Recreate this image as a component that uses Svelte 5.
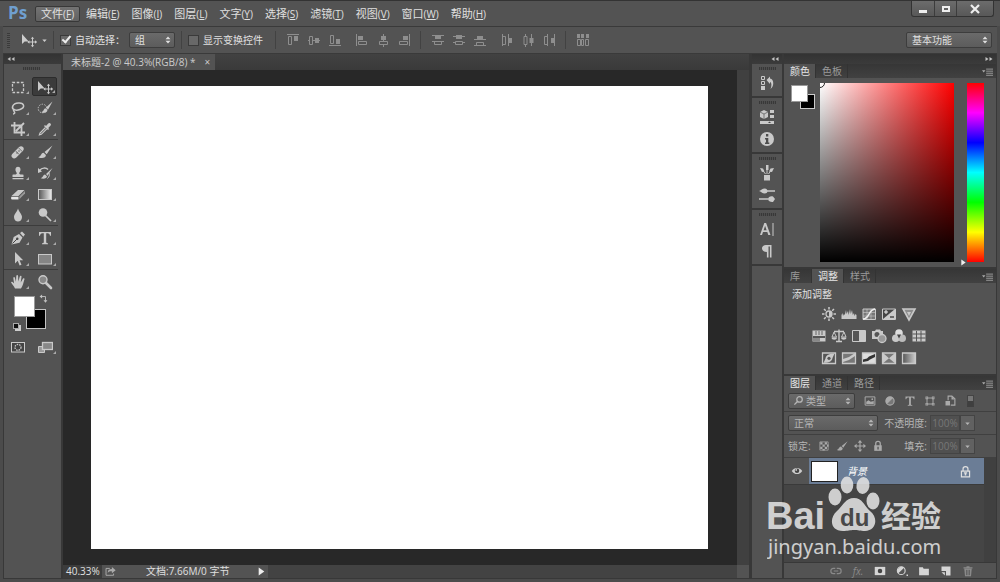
<script lang="ts">
	const menus = [
		['文件', 'F'],
		['编辑', 'E'],
		['图像', 'I'],
		['图层', 'L'],
		['文字', 'Y'],
		['选择', 'S'],
		['滤镜', 'T'],
		['视图', 'V'],
		['窗口', 'W'],
		['帮助', 'H']
	];

	const alignGroups = [
		[
			['alignTop', 'alignMiddle', 'alignBottom'],
			['alignLeft', 'alignCenter', 'alignRight']
		],
		[
			['distTop', 'distMiddle', 'distBottom'],
			['distLeft', 'distCenter', 'distRight']
		],
		[['autoAlign']]
	];

	const toolGroups = [
		['marquee', 'move', 'lasso', 'quickSelect', 'crop', 'eyedropper'],
		['heal', 'brush', 'stamp', 'historyBrush', 'eraser', 'gradient', 'blur', 'dodge'],
		['pen', 'type', 'pathSelect', 'rectangle'],
		['hand', 'zoom']
	];

	const dockGroups = [['history'], ['properties', 'info'], ['brushPresets', 'brushes'], ['character', 'paragraph']];

	const adjustments = [
		['brightness', 'levels', 'curves', 'exposure', 'vibrance'],
		['hue', 'balance', 'blackWhite', 'photoFilter', 'mixer', 'lookup'],
		['invert', 'posterize', 'threshold', 'selectiveColor', 'gradientMap']
	];

	const filters = ['image', 'adjust', 'type', 'shape', 'smart'];
	const locks = ['checker', 'brush', 'moveAll', 'lock'];
	const footer = ['link', 'fx', 'mask', 'adjustMenu', 'folder', 'newLayer', 'trash'];

	const f = 'fill="currentColor"';
	const s = 'fill="none" stroke="currentColor"';

	// 16x16 glyphs, drawn in the current text colour
	const icons: Record<string, string> = {
		marquee: `<rect x="2.5" y="3.5" width="11" height="10" ${s} stroke-width="1.3" stroke-dasharray="2.6 1.6"/>`,
		move: `<path d="M1 2v10l2.700-2.500h4z" ${f}/><path d="M11.500 6v8M7.500 10h8" ${s}/><path d="M11.500 4.800l1.700 2h-3.400zM11.500 15.200l1.700-2h-3.400zM6.400 10l2-1.700v3.400zM16 10l-2-1.700v3.400z" ${f}/>`,
		lasso: `<path d="M4.500 10C1 8.500 2 3.500 8.500 3c6-.4 7 4.500 1.500 6.500-2.500.9-5 1-6.200-.2-1.200 1.500.8 2.200.9 3.200.1.800-.7 1.500-1.700 1.500" ${s} stroke-width="1.500"/>`,
		quickSelect: `<circle cx="5.500" cy="8.500" r="4.300" ${s} stroke-dasharray="1.400 1.300"/><path d="M15.500 1.500L9 7.500l2 2.200zM8.400 8.200c-2 .4-1.200 3-4.200 4 3 1.500 6.300.300 6.200-2.200z" ${f}/>`,
		crop: `<path d="M4.500 1v10.500H15M1 4.500h10.500V15M6 10l8-8" ${s} stroke-width="1.800"/>`,
		eyedropper: `<path d="M9 5l2.200-2.500c1.300-1.700 3.800.6 2.400 2L11.300 7l.7 1-1 1-4-4 1-1z" ${f}/><path d="M8.500 6.500L3 12l-.6 1.800 1.900-.5 5.500-5.500" ${s} stroke-width="1.200"/>`,
		heal: `<path d="M2.200 10l6.900-7c2.600-2.400 6.300 1 3.900 3.700l-6.900 7c-2.600 2.400-6.300-1-3.900-3.700z" ${f}/><path d="M5.500 6.800l4 4M8.500 3.800l4 4" stroke="#777"/><circle cx="7" cy="9" r=".7" fill="#555"/><circle cx="9" cy="7" r=".7" fill="#555"/>`,
		brush: `<path d="M15.500 1.500L7.500 8l2.200 2.300zM6.600 8.700c-2.700.1-2.200 3.500-5.400 4.500 3.500 1.700 8 .8 7.700-2.200z" ${f}/>`,
		stamp: `<path d="M6.800 8C4.500 5 5.400 1.800 8 1.800S11.500 5 9.200 8c0 1.200.6 1.500 4.300 1.700V12h-11V9.700C6.200 9.500 6.800 9.200 6.800 8zM2.500 13h11v1.300h-11z" ${f}/>`,
		historyBrush: `<path d="M2.500 5.500C5 2.500 9 2.500 11 4.500" ${s} stroke-width="1.500"/><path d="M1 3v5l4-1.500zM15.500 3L9 9l1.600 1.700zM8 9.500c-2 .4-1.700 2.700-4.300 3.700 3 1.200 6.500 0 6.200-1.900z" ${f}/><path d="M12 8c1 2 0 4-1.500 5.500" ${s}/>`,
		eraser: `<path d="M1.500 10L8 4h6.500L8.500 10z" ${f}/><path d="M1.500 10.700h7v2.800H2c-1 0-1.200-1.800-.5-2.800z" fill="#e6e6e6"/><path d="M9.300 10.500L15 5v2.500l-5.700 5.800z" fill="#999"/>`,
		gradient: `<defs><linearGradient id="g-tool"><stop stop-color="#555"/><stop offset="1" stop-color="#eee"/></linearGradient></defs><rect x="1.500" y="3.500" width="13" height="10" fill="url(#g-tool)" stroke="currentColor"/>`,
		blur: `<path d="M8 1.500c1 3.500 4 5.500 4 8.500 0 6-8 6-8 0 0-3 3-5 4-8.500z" ${f}/>`,
		dodge: `<circle cx="6" cy="5.500" r="4.300" ${f}/><path d="M8.500 8.500l5.500 5.500" ${s} stroke-width="1.700"/>`,
		pen: `<path d="M1.500 14.500L3.700 7 9 4l3.500 3.500-3 5.300zM10 3l2-1.500L15 4.500 13.300 6.700z" ${f}/><path d="M2.500 13.500L7 9" stroke="#444"/><circle cx="7.300" cy="8.700" r="1.200" fill="#444"/>`,
		type: `<path d="M2 2h12v3.800h-1C12.700 3.800 12 3.300 9.200 3.300V12c0 1 .5 1.300 1.800 1.300v.9H5v-.9c1.300 0 1.800-.3 1.800-1.300V3.300C4 3.300 3.300 3.800 3 5.800H2z" ${f}/>`,
		pathSelect: `<path d="M5 1v11.500l2.700-2.700 1.900 4.700 1.900-.8-1.900-4.500h3.600z" ${f}/>`,
		rectangle: `<rect x="1.500" y="3.500" width="13" height="9.500" fill="#858585" stroke="currentColor"/>`,
		hand: `<path d="M5 14.500C4 12 2 10.500 1 8.300c.5-1 1.700-.5 3.100 1.300L3.300 4c0-1.200 1.400-1.300 1.700-.1l.9 3.800L6.300 2c.1-1.200 1.700-1.200 1.800 0l.2 5.600L9.800 2.500c.4-1.100 1.900-.7 1.700.4l-.8 5.500 2.200-3.700c.7-1 1.900-.3 1.500.8-1.200 3.500-1.300 6-3.400 9z" ${f}/>`,
		zoom: `<circle cx="6" cy="5.800" r="4" fill="#888" stroke="currentColor" stroke-width="1.400"/><path d="M9 9l5 5" ${s} stroke-width="2.600" stroke-linecap="round"/>`,
		quickMask: `<rect x="1" y="3" width="14" height="10.500" ${f}/><rect x="2" y="4" width="12" height="8.500" fill="#444"/><circle cx="8" cy="8.300" r="3" ${s} stroke-width="1.300" stroke-dasharray="1.500 1"/>`,
		screenMode: `<path d="M1.500 7.500h6v6h-6z" fill="#999" stroke="currentColor"/><rect x="5.500" y="3.500" width="10" height="7" fill="#888" stroke="currentColor" stroke-width="1.300"/>`,

		alignTop: `<path d="M2 2.500h12M3.500 4.500h3v8h-3z" ${s}/><path d="M9 4h4v5H9z" ${f}/>`,
		alignMiddle: `<path d="M2 8.500h2M7 8.500h7M3.500 4.500h3v8h-3z" ${s}/><path d="M9 6h4v5H9z" ${f}/>`,
		alignBottom: `<path d="M2 13.500h12M3.500 3.500h3v8h-3z" ${s}/><path d="M9 7h4v5H9z" ${f}/>`,
		alignLeft: `<path d="M2.500 2v12M4.500 9.500h8v3h-8z" ${s}/><path d="M4 4h5v4H4z" ${f}/>`,
		alignCenter: `<path d="M8.500 2v7M8.500 13v2M4.500 9.500h8v3h-8z" ${s}/><path d="M6 4h5v4H6z" ${f}/>`,
		alignRight: `<path d="M13.500 2v12M3.500 9.500h8v3h-8z" ${s}/><path d="M7 4h5v4H7z" ${f}/>`,
		distTop: `<path d="M2 3.500h12M2 9.500h12M4.500 9.500h7v3h-7z" ${s}/><path d="M5 4h6v3H5z" ${f}/>`,
		distMiddle: `<path d="M2 4.500h12M2 10.500h2.500M11.500 10.500H14M4.500 9.500h7v3h-7z" ${s}/><path d="M5 3h6v4H5z" ${f}/>`,
		distBottom: `<path d="M2 7.500h12M2 13.500h12M4.500 10.500h7v3h-7z" ${s}/><path d="M5 4h6v3H5z" ${f}/>`,
		distLeft: `<path d="M3.500 2v12M9.500 2v12M3.500 4.500h3v8h-3z" ${s}/><path d="M10 6h3v5h-3z" ${f}/>`,
		distCenter: `<path d="M5.500 2v2M5.500 13v2M11.500 2v12M4 4.500h3v8H4z" ${s}/><path d="M9.500 6h4v5h-4z" ${f}/>`,
		distRight: `<path d="M6.500 2v12M13.500 2v12M3.500 4.500h3v8h-3z" ${s}/><path d="M10 6h3v5h-3z" ${f}/>`,
		autoAlign: `<path d="M2 2h3v4H2zM6 2h3v4H6zM11 2h3v4h-3z" ${f}/><path d="M2.500 7.500h3v6h-3zM6.500 7.500h2v6h-2zM10.500 7.500h3v6h-3z" ${s}/>`,

		history: `<path d="M2.500 1.500h3v3h-3zM2.500 6.500h3v3h-3z" ${s}/><path d="M2 11h4v4H2zM7.500 5L11 1.500V3.500c4 .5 4.500 7.500.5 10.500C13 10 12.500 7.500 11 7v2z" ${f}/>`,
		properties: `<path d="M5 1l4 2v5L5 10 1 8V3z" ${f}/><path d="M1 3l4 2 4-2M5 5v5" stroke="#555" fill="none" stroke-width=".7"/><path d="M11 1h4v3h-4zM11 6h4v3h-4zM1 12h14v3H1z" ${f}/><path d="M9 14l3 0-1.500-1.500z" fill="#444"/>`,
		info: `<circle cx="8" cy="8" r="7" ${f}/><path d="M6 7h3.300v4.500h1V13H6v-1.500h1V8.500H6zM7 3h2.300v2.500H7z" fill="#4d4d4d"/>`,
		brushPresets: `<path d="M5 10h6v5.500H5z" ${f}/><path d="M8 9V3M6.500 9L3 4.500M9.500 9L13 4" ${s}/><path d="M7 0h2.500v5H7zM1 3l3 .5 1.500 3L3 7zM15 3l-3.500.500L10 6.500l3 .500z" ${f}/>`,
		brushes: `<path d="M8 4h8M0 12h9" ${s} stroke-width="1.500"/><path d="M0 4c2-.3 3-2.500 5.500-2.500C8 1.500 8.500 3 8.500 4S8 6.500 5.500 6.500C3 6.500 2 4.500 0 4zM9 12c0-2 3-3.500 5-2.500l2 2.500-2 3c-2 .500-5-1-5-3z" ${f}/>`,
		character: `<path d="M1 14L5.300 2h1.800L11.500 14H9.300l-1-3H4l-1 3zM4.600 9.300h3L6.100 4.800zM13.500 2h1v13h-1z" ${f}/>`,
		paragraph: `<path d="M12.500 2v12.500h-1.600V3.500H9.500v11H7.900V9C1.500 9 1.500 2 7 2z" ${f}/>`,

		brightness: `<circle cx="8" cy="8" r="3" ${s} stroke-width="1.300"/><path d="M8 5a3 3 0 010 6z" ${f}/><path d="M8 1v2.500M8 12.500V15M1 8h2.500M12.500 8H15M3 3l1.800 1.800M11.200 11.200L13 13M13 3l-1.800 1.800M4.800 11.200L3 13" ${s} stroke-width="1.500"/>`,
		levels: `<path d="M.5 13V9l1-2 .5 3 1-2 .8 1L5 4l.5 4L7 5l.7 4L9 3l.8 5L11 4l.8 5L13 7l.5 3 1-2 1 1v4z" ${f}/>`,
		curves: `<path d="M2 3h12.500v10.500H2z" fill="#777" stroke="currentColor"/><path d="M2 6.500h12M2 10h12M6 3v10M10 3v10" ${s} stroke-width=".6"/><path d="M2 13c7 0 5-9.500 12-10" fill="none" stroke="#eee" stroke-width="1.500"/>`,
		exposure: `<path d="M1.500 3h13v10.500h-13z" fill="#444" stroke="currentColor"/><path d="M14 3v10H2z" ${f}/><path d="M3 6h4M5 4v4" stroke="#eee"/><path d="M9 11h4" stroke="#333" stroke-width="1.300"/>`,
		vibrance: `<path d="M2 3h12L8 14z" fill="#8d8d8d" stroke="currentColor" stroke-width="1.600"/><path d="M6 6h4l-2 4z" ${f}/>`,
		hue: `<path d="M1.500 2.500h13v11h-13z" ${f}/><path d="M5 3v4M8 3v4M11 3v4" stroke="#666"/><path d="M2 8h12v2H2z" fill="#555"/><path d="M2 10h7v3H2z" fill="#888"/>`,
		balance: `<path d="M8 1.500V13M3 3.500h10M5 13.500h6" ${s} stroke-width="1.400"/><path d="M3 4L1 9h4.500zM13 4l-2.500 5H15z" ${s}/><path d="M.5 9.500h5.500c0 3-5.500 3-5.500 0zM10 9.500h5.500c0 3-5.500 3-5.500 0z" ${f}/>`,
		blackWhite: `<path d="M1.500 2.500h13v11h-13z" fill="#555" stroke="currentColor"/><path d="M8 3h6.500v10.500H8z" ${f}/>`,
		photoFilter: `<path d="M1 3h3l1-1.500h4L10 3h2v8H1z" ${f}/><circle cx="6" cy="6.500" r="2.500" fill="#555"/><circle cx="11" cy="10.500" r="4" fill="#999" stroke="currentColor" stroke-width="1.300"/>`,
		mixer: `<circle cx="8" cy="5" r="3.800" fill="#ddd"/><circle cx="4.800" cy="10.300" r="3.800" ${f}/><circle cx="11.200" cy="10.300" r="3.800" fill="#bbb"/><path d="M6 6.500h4L8 10.500z" fill="#444"/>`,
		lookup: `<path d="M1.500 2.500h13v11h-13z" ${f}/><path d="M1.500 6h13M1.500 10h13M5.500 3v10.500M10 3v10.500" stroke="#555"/>`,
		invert: `<path d="M1.500 3h13v10.500h-13z" fill="#555" stroke="currentColor" stroke-width="1.300"/><path d="M13.500 3.500C10 4 5 4 4.500 8.500L2.500 13C6 12.500 11 12.500 11.500 8z" ${f}/><circle cx="8" cy="8.300" r="1.600" fill="#555"/>`,
		posterize: `<path d="M1.500 3h13v10.500h-13z" fill="#777" stroke="currentColor" stroke-width="1.300"/><path d="M2 9l6-2 6-4v3l-6 4-6 2z" ${f}/>`,
		threshold: `<path d="M1.500 3h13v10.500h-13z" fill="#ddd" stroke="currentColor" stroke-width="1.300"/><path d="M2 9.500l4-1 2-2 6-2.500v3L9 9.500 7 11l-5 1z" fill="#333"/>`,
		selectiveColor: `<path d="M1.500 3h13v10.500h-13z" fill="#777" stroke="currentColor" stroke-width="1.300"/><path d="M2 3l6 5.300-6 5zM14 3L8 8.300l6 5z" ${f}/>`,
		gradientMap: `<defs><linearGradient id="g-map"><stop stop-color="#555"/><stop offset="1" stop-color="#ccc"/></linearGradient></defs><path d="M1.500 3h13v10.500h-13z" fill="url(#g-map)" stroke="currentColor" stroke-width="1.300"/>`,

		search: `<circle cx="9.500" cy="6.500" r="4" ${s} stroke-width="1.800"/><path d="M6.500 9.500L2 14" ${s} stroke-width="2"/>`,
		image: `<path d="M1.500 2.500h13v11h-13z" ${s} stroke-width="1.300"/><path d="M3 12V9l3-2 3 2 4-1v4z" ${f}/><circle cx="11" cy="5.500" r="1.200" ${f}/>`,
		adjust: `<circle cx="8" cy="8" r="5.500" fill="#777" stroke="currentColor" stroke-width="1.500"/><path d="M4 12A5.600 5.600 0 0112 4z" ${f}/>`,
		shape: `<path d="M4 4h8v8H4z" ${s} stroke-width="1.300"/><path d="M2 2h3.500v3.500H2zM10.500 2H14v3.500h-3.500zM2 10.500h3.500V14H2zM10.500 10.500H14V14h-3.500z" ${f}/><path d="M3.300 3.300h1v1h-1zM11.700 3.300h1v1h-1zM3.300 11.700h1v1h-1zM11.700 11.700h1v1h-1z" fill="#444"/>`,
		smart: `<path d="M5.500 7V1.500h5L14.500 5v8.500H9" ${s} stroke-width="1.500"/><path d="M2 8h6v6H2zM10 1v5h4z" ${f}/>`,
		checker: `<path d="M2.500 2.500h11v11h-11z" ${s}/><path d="M3 3h3v3H3zM9 3h3v3H9zM6 6h3v3H6zM12 6h2v3h-2zM3 9h3v3H3zM9 9h3v3H9zM6 12h3v2H6z" ${f}/>`,
		moveAll: `<path d="M8 3v10M3 8h10" ${s} stroke-width="1.500"/><path d="M8 0l3 3.500H5zM8 16l3-3.500H5zM0 8l3.500-3v6zM16 8l-3.500-3v6z" ${f}/>`,
		lock: `<path d="M5 8V4.500C5 1 11 1 11 4.500V8" ${s} stroke-width="1.700"/><path d="M3 7h10v7.500H3z" ${f}/><path d="M7.300 9h1.500v3.500H7.300z" fill="#444"/>`,
		layerLock: `<path d="M5 7.500V4.500C5 1 11 1 11 4.500v3M3 7.500h10v7H3z" ${s} stroke-width="1.500"/><path d="M6 9h4v1.500H6zM7 10h2v3H7z" ${f}/>`,
		eye: `<path d="M1 8c3-5.500 11-5.500 14 0-3 5.500-11 5.500-14 0z" ${f}/><circle cx="8" cy="7.500" r="3" fill="#444"/><circle cx="7" cy="6.500" r="1.200" ${f}/>`,

		link: `<path d="M7 4.500H4.500c-4.500 0-4.500 7 0 7H7M9 4.500h2.500c4.500 0 4.500 7 0 7H9M5 8h6" ${s} stroke-width="1.600"/>`,
		mask: `<path d="M1 2.500h14v11H1z" ${f}/><circle cx="8" cy="8" r="3" fill="#444"/>`,
		adjustMenu: `<circle cx="7" cy="7.500" r="5.200" fill="#555" stroke="currentColor" stroke-width="1.500"/><path d="M3.200 11A5.300 5.300 0 0110.800 3.700zM14 12.500h2v2h-2z" ${f}/>`,
		folder: `<path d="M1.500 3h5l1 2h7v8.500h-13z" ${f}/>`,
		newLayer: `<path d="M2 2h12v12H8V8H2z" ${f}/><path d="M2 9.500h4.500V14z" ${f}/>`,
		trash: `<path d="M3 5h10l-1 10H4zM2 3h12v1.500H2zM6 1.500h4V3H6z" ${f}/><path d="M6 6.500v7M8 6.500v7M10 6.500v7" stroke="#555"/>`,
		updown: `<path d="M8 1l5 5.500H3zM8 15l5-5.500H3z" ${f}/>`,
		down: `<path d="M3 5.500h10L8 11.500z" ${f}/>`,
		left2: `<path d="M7 4v8L1 8zM15 4v8L9 8z" ${f}/>`,
		right2: `<path d="M1 4v8l6-4zM9 4v8l6-4z" ${f}/>`,
		panelMenu: `<path d="M0 6h5L2.500 9.500z" ${f}/><path d="M6 4.500h10M6 7.500h10M6 10.500h10M6 13.500h10" ${s} stroke-width="1.200"/>`,
		swap: `<path d="M4 4.500h7.500V12" ${s} stroke-width="1.600"/><path d="M1 4.500L5.500 1v7zM11.500 15.500L8 11h7z" ${f}/>`,
		share: `<path d="M7 3.500H1.500v10h11V11" ${s} stroke-width="1.400"/><path d="M4 10c0-4 2-5.500 6-5.500V1.500L15.500 6 10 10.500v-3c-3 0-4.500.5-6 2.500z" ${f}/>`,
		play: `<path d="M3 1v14l10-7z" ${f}/>`
	};

	let autoSelect = $state(true);
	let showTransform = $state(false);
	let activeTool = $state('move');
</script>

{#snippet icon(name: string, size = 16)}
	<svg class="icon" width={size} height={size} viewBox="0 0 16 16" aria-hidden="true">
		{@html icons[name]}
	</svg>
{/snippet}

{#snippet dropdown(label: string, value: string, kind: string)}
	<span class="dropdown {kind}">
		{#if kind === 'filter'}<span class="lead">{@render icon('search', 11)}</span>{/if}
		<select aria-label={label}><option>{value}</option></select>
		<span class="arrows">{@render icon('updown', 8)}</span>
	</span>
{/snippet}

{#snippet tabs(names: string[], active: number)}
	<div class="tabs">
		{#each names as name, i}
			<button class="tab" class:active={i === active}>{name}</button>
		{/each}
		<button class="tab-menu" aria-label="面板菜单">{@render icon('panelMenu', 11)}</button>
	</div>
{/snippet}

<div class="app">
	<header class="menubar">
		<span class="logo">Ps</span>
		<nav>
			{#each menus as [name, key], i}
				<button class="menu" class:open={i === 0}>{name}<small>(<u>{key}</u>)</small></button>
			{/each}
		</nav>
		<div class="window-buttons">
			<button aria-label="最小化"><span class="min"></span></button>
			<button aria-label="最大化"><span class="max"></span></button>
			<button class="close" aria-label="关闭">
				<svg width="10" height="10" viewBox="0 0 10 10"><path d="M1 1l8 8M9 1L1 9" stroke="#eee" stroke-width="2.200" /></svg>
			</button>
		</div>
	</header>

	<div class="options">
		<span class="grip-v"></span>
		<button class="current-tool" aria-label="移动工具">{@render icon('move')}{@render icon('down', 7)}</button>
		<span class="rule"></span>
		<label class="check auto"><input type="checkbox" bind:checked={autoSelect} />自动选择：</label>
		{@render dropdown('自动选择', '组', 'group')}
		<span class="rule"></span>
		<label class="check transform"><input type="checkbox" bind:checked={showTransform} />显示变换控件</label>
		{#each alignGroups as pair}
			<span class="rule"></span>
			<div class="aligns">
				{#each pair as group}
					<div class="align-group">
						{#each group as name}
							<button aria-label={name}>{@render icon(name)}</button>
						{/each}
					</div>
				{/each}
			</div>
		{/each}
		<div class="workspace-pick">{@render dropdown('工作区', '基本功能', 'workspace')}</div>
	</div>

	<main>
		<aside class="tools">
			<div class="strip">{@render icon('left2', 8)}</div>
			<div class="tools-body">
				<span class="grip"></span>
				{#each toolGroups as group}
					<div class="tool-group">
						{#each group as name}
							<button
								class="tool"
								class:active={name === activeTool}
								class:plain={name === 'zoom'}
								aria-label={name}
								onclick={() => (activeTool = name)}
							>
								{@render icon(name)}
							</button>
						{/each}
					</div>
				{/each}
				<div class="colors">
					<button class="bg" aria-label="背景色"></button>
					<button class="fg" aria-label="前景色"></button>
					<span class="swap">{@render icon('swap', 9)}</span>
					<span class="reset"></span>
				</div>
				<div class="tool-group modes">
					<button class="tool plain" aria-label="快速蒙版">{@render icon('quickMask')}</button>
					<button class="tool" aria-label="屏幕模式">{@render icon('screenMode')}</button>
				</div>
			</div>
		</aside>

		<section class="document">
			<div class="doc-tabs">
				<div class="doc-tab">未标题-2 @ 40.3%(RGB/8) * <button aria-label="关闭文档">×</button></div>
			</div>
			<div class="stage">
				<div class="canvas"></div>
			</div>
			<div class="scroll-v"></div>
			<footer class="status">
				<span class="zoom">40.33%</span>
				<span class="share">{@render icon('share', 11)}</span>
				<span class="size">文档:7.66M/0 字节</span>
				<button aria-label="更多">{@render icon('play', 9)}</button>
			</footer>
		</section>

		<aside class="dock">
			<div class="strip end">{@render icon('left2', 8)}</div>
			{#each dockGroups as group}
				<div class="dock-group">
					<span class="grip"></span>
					{#each group as name}
						<button aria-label={name}>{@render icon(name)}</button>
					{/each}
				</div>
			{/each}
			<div class="dock-fill"></div>
		</aside>

		<aside class="panels">
			<div class="strip end">{@render icon('right2', 8)}</div>

			<section class="panel">
				{@render tabs(['颜色', '色板'], 0)}
				<div class="color-body">
					<div class="pair">
						<button class="bg" aria-label="背景色"></button>
						<button class="fg" aria-label="前景色"></button>
					</div>
					<div class="field"><span class="picker"></span></div>
					<div class="hue"><span class="hue-mark">{@render icon('play', 7)}</span></div>
				</div>
			</section>

			<section class="panel">
				{@render tabs(['库', '调整', '样式'], 1)}
				<div class="adjust-body">
					<h2>添加调整</h2>
					{#each adjustments as row}
						<div class="adjust-row">
							{#each row as name}
								<button aria-label={name}>{@render icon(name)}</button>
							{/each}
						</div>
					{/each}
				</div>
			</section>

			<section class="panel layers">
				{@render tabs(['图层', '通道', '路径'], 0)}
				<div class="layer-row filter-row">
					{@render dropdown('筛选', '类型', 'filter')}
					<div class="filters">
						{#each filters as name}
							<button aria-label={name}>{@render icon(name, 12)}</button>
						{/each}
					</div>
					<span class="toggle"></span>
				</div>
				<div class="layer-row">
					{@render dropdown('混合模式', '正常', 'blend')}
					<label class="amount">不透明度:<input value="100%" disabled /></label>
					<button class="step" aria-label="不透明度">{@render icon('down', 7)}</button>
				</div>
				<div class="layer-row">
					<span class="lock-label">锁定:</span>
					<div class="locks">
						{#each locks as name}
							<button aria-label={name}>{@render icon(name, 12)}</button>
						{/each}
					</div>
					<label class="amount">填充:<input value="100%" disabled /></label>
					<button class="step" aria-label="填充">{@render icon('down', 7)}</button>
				</div>
				<div class="layer-list">
					<div class="layer">
						<button class="eye" aria-label="可见性">{@render icon('eye', 12)}</button>
						<div class="layer-main">
							<span class="thumb"></span>
							<em>背景</em>
							{@render icon('layerLock', 13)}
						</div>
					</div>
				</div>
				<div class="layer-footer">
					{#each footer as name}
						<button class:dim={name === 'link' || name === 'fx' || name === 'trash'} aria-label={name}>
							{#if name === 'fx'}<i>fx.</i>{:else}{@render icon(name, 12)}{/if}
						</button>
					{/each}
				</div>
			</section>
		</aside>
	</main>

	<svg class="watermark" width="180" height="90" viewBox="0 0 180 90">
		<g fill="#e2e2e2">
			<text class="wm-bold" x="-1" y="54">Bai</text>
			<ellipse cx="68" cy="22" rx="6.500" ry="8.500" />
			<ellipse cx="80" cy="10" rx="6.300" ry="8.500" />
			<ellipse cx="96" cy="10.500" rx="6.500" ry="8.500" transform="rotate(10 96 10.500)" />
			<ellipse cx="106" cy="26" rx="6.500" ry="8.500" />
			<path d="M87 23c9 0 10 8 16 13 9 7 6 20-5 20-5 0-7-1-11-1s-6 1-11 1c-13 0-14-13-6-20 6-5 8-13 17-13z" />
			<text class="wm-cjk" x="114" y="52">经验</text>
			<text class="wm-url" x="1" y="79">jingyan.baidu.com</text>
		</g>
		<text class="wm-du" x="73" y="51">du</text>
	</svg>
</div>

<style>
	:global(body) {
		margin: 0;
		background: #383838;
	}

	.app {
		position: relative;
		box-sizing: border-box;
		display: flex;
		flex-direction: column;
		min-height: 100vh;
		padding: 0 3px 3px;
		border-top: 1px solid #333;
		background: #4b4b4b;
		color: #e0e0e0;
		font: 10px/14px 'Open Sans', 'Noto Sans CJK SC', sans-serif;
	}

	button,
	select,
	input {
		box-sizing: border-box;
		margin: 0;
		padding: 0;
		border: 0;
		border-radius: 0;
		background: none;
		color: inherit;
		font: inherit;
	}

	button {
		display: flex;
		align-items: center;
		justify-content: center;
	}

	.icon {
		display: block;
		flex: none;
	}

	/* Menu bar */
	.menubar {
		display: flex;
		height: 25px;
		background: #535353;
		margin: 0 -3px;
		padding: 0 6px 0 8px;
	}

	.logo {
		width: 27px;
		color: #6f9fcf;
		font: bold 17px/23px 'Open Sans', sans-serif;
	}

	nav {
		display: flex;
		align-items: center;
	}

	.menu {
		height: 16px;
		padding: 0 5px;
		border: 1px solid transparent;
		border-radius: 2px;
		font-size: 11px;
		white-space: nowrap;
	}

	.menu small {
		font-size: 10px;
	}

	.menu.open {
		border-color: #383838;
		background: linear-gradient(#737373, #616161);
	}

	.window-buttons {
		display: flex;
		height: 15px;
		margin-left: auto;
		border: 1px solid #333;
		border-top: 0;
		border-radius: 0 0 3px 3px;
		background: linear-gradient(#6c6c6c, #585858);
	}

	.window-buttons button {
		width: 22px;
	}

	.window-buttons button + button {
		border-left: 1px solid #3c3c3c;
	}

	.window-buttons .close {
		width: 37px;
	}

	.min {
		width: 8px;
		height: 3px;
		margin-top: 5px;
		background: #eee;
	}

	.max {
		width: 4px;
		height: 2px;
		border: 2px solid #eee;
	}

	/* Options bar */
	.options {
		display: flex;
		align-items: center;
		height: 26px;
		padding: 0 5px 0 4px;
		border-top: 1px solid #3a3a3a;
		border-bottom: 1px solid #3a3a3a;
		background: #535353;
	}

	.grip-v {
		width: 3px;
		height: 15px;
		margin-right: 11px;
		background: repeating-linear-gradient(#3a3a3a 0 1px, #555 1px 2px);
	}

	.current-tool {
		gap: 4px;
		width: 26px;
		color: #ccc;
	}

	.rule {
		width: 1px;
		height: 18px;
		margin: 0 6px;
		background: #424242;
	}

	.check {
		display: flex;
		align-items: center;
		gap: 4px;
		white-space: nowrap;
	}

	.auto {
		width: 69px;
	}

	.transform {
		width: 81px;
	}

	.check input {
		appearance: none;
		width: 11px;
		height: 11px;
		border: 1px solid #3a3a3a;
		background: #686868;
	}

	.check input:checked::after {
		content: '';
		display: block;
		width: 3px;
		height: 7px;
		margin: -2px 0 0 3px;
		border: solid #eee;
		border-width: 0 2px 2px 0;
		transform: rotate(40deg);
	}

	.dropdown {
		display: grid;
		align-items: center;
		height: 16px;
		box-sizing: border-box;
		border: 1px solid #3d3d3d;
		border-radius: 2px;
		background: linear-gradient(#6a6a6a, #5c5c5c);
	}

	.dropdown > * {
		grid-area: 1 / 1;
	}

	.dropdown select {
		appearance: none;
		width: 100%;
		height: 14px;
		padding-left: 5px;
	}

	.arrows {
		justify-self: end;
		margin-right: 2px;
		pointer-events: none;
	}

	.lead {
		margin-left: 4px;
	}

	.dropdown.group {
		width: 46px;
	}

	.dropdown.workspace {
		width: 86px;
	}

	.dropdown.filter {
		width: 67px;
		color: #b5b5b5;
	}

	.dropdown.filter select {
		padding-left: 17px;
	}

	.dropdown.blend {
		width: 90px;
		color: #b5b5b5;
	}

	.aligns {
		display: flex;
		gap: 6px;
		color: #8e8e8e;
	}

	.align-group {
		display: flex;
	}

	.align-group button {
		width: 21px;
	}

	.workspace-pick {
		margin-left: auto;
	}

	/* Work area */
	main {
		flex: 1;
		display: flex;
		background: #383838;
		padding: 0 1px 1px;
	}

	.strip {
		display: flex;
		align-items: center;
		height: 10px;
		padding: 0 3px;
		background: linear-gradient(#333, #3b3b3b);
		color: #c4c4c4;
	}

	.strip.end {
		justify-content: flex-end;
	}

	.grip {
		display: block;
		width: 17px;
		height: 3px;
		margin: 3px auto 2px;
		background: repeating-linear-gradient(90deg, #383838 0 1px, #4d4d4d 1px 2px);
	}

	.tools {
		display: flex;
		flex-direction: column;
		width: 57px;
		margin-right: 2px;
	}

	.tools-body {
		flex: 1;
		padding-right: 3px;
		background: #535353;
	}

	.tools-body > .grip {
		margin-bottom: 6px;
	}

	.tool-group {
		display: grid;
		grid-template-columns: 27px 27px;
		grid-auto-rows: 21px;
	}

	.tool-group + .tool-group {
		padding-top: 1px;
		border-top: 1px solid #3c3c3c;
	}

	.tool {
		position: relative;
		margin: 1px;
		color: #c9c9c9;
	}

	.tool::after {
		content: '';
		position: absolute;
		right: 1px;
		bottom: 2px;
		border: solid transparent;
		border-width: 3px 0 0 3px;
		border-right: 3px solid #aaa;
		border-left: 0;
	}

	.tool.plain::after {
		display: none;
	}

	.tool.active {
		border: 1px solid #2c2c2c;
		border-radius: 2px;
		background: #3b3b3b;
	}

	.colors {
		position: relative;
		height: 44px;
	}

	.fg,
	.bg {
		position: absolute;
		box-sizing: border-box;
		border: 1px solid #999;
	}

	.colors .fg {
		left: 10px;
		top: 4px;
		width: 21px;
		height: 21px;
		background: #fff;
	}

	.colors .bg {
		left: 22px;
		top: 17px;
		width: 20px;
		height: 20px;
		border-color: #c4c4c4;
		background: #000;
	}

	.swap {
		position: absolute;
		left: 35px;
		top: 2px;
		color: #c4c4c4;
	}

	.reset {
		position: absolute;
		left: 9px;
		top: 31px;
		width: 4px;
		height: 4px;
		border: 1px solid #aaa;
		background: #111;
		box-shadow: 2px 2px 0 #ccc;
	}

	/* Document */
	.document {
		flex: 1;
		min-width: 0;
		display: grid;
		grid-template: 16px 1fr 13px / 1fr 12px;
		margin-right: 3px;
	}

	.doc-tabs {
		grid-column: 1 / 3;
		display: flex;
		background: linear-gradient(#424242, #3a3a3a);
	}

	.doc-tab {
		display: flex;
		align-items: center;
		gap: 9px;
		padding: 0 5px 0 8px;
		background: #535353;
		color: #ccc;
		white-space: nowrap;
	}

	.stage {
		display: flex;
		padding: 16px 29px 16px 28px;
		background: #282828;
	}

	.canvas {
		flex: 1;
		background: #fff;
	}

	.scroll-v {
		background: #404040;
	}

	.status {
		grid-column: 1 / 3;
		display: flex;
		align-items: stretch;
		background: #434343;
		line-height: 13px;
		white-space: nowrap;
	}

	.status::after {
		content: '';
		width: 12px;
		margin-left: auto;
		background: #535353;
	}

	.zoom {
		width: 36px;
		padding-left: 3px;
		background: #3c3c3c;
	}

	.share {
		width: 41px;
		padding: 1px 0 0 3px;
		background: #535353;
		color: #aaa;
	}

	.size {
		width: 108px;
		background: #535353;
	}

	.status button {
		width: 14px;
		background: #535353;
		color: #eee;
	}

	/* Collapsed dock */
	.dock {
		display: flex;
		flex-direction: column;
		width: 30px;
		margin-right: 2px;
	}

	.dock-group {
		display: flex;
		flex-direction: column;
		padding-bottom: 2px;
		margin-bottom: 2px;
		background: #535353;
		color: #c9c9c9;
	}

	.dock-group button {
		height: 22px;
	}

	.dock-fill {
		flex: 1;
		background: #535353;
	}

	/* Panels */
	.panels {
		display: flex;
		flex-direction: column;
		width: 212px;
	}

	.panel {
		margin-bottom: 2px;
		background: #535353;
	}

	.tabs {
		display: flex;
		height: 14px;
		background: linear-gradient(#363636, #414141);
	}

	.tab {
		justify-content: flex-start;
		min-width: 28px;
		padding: 0 5px 0 6px;
		border-right: 1px solid #333;
		color: #9a9a9a;
		line-height: 14px;
	}

	.tab.active {
		background: #535353;
		color: #e6e6e6;
	}

	.tab-menu {
		margin-left: auto;
		padding-right: 3px;
		color: #aaa;
	}

	.color-body {
		display: flex;
		height: 179px;
		padding: 5px 12px 5px 7px;
	}

	.pair {
		position: relative;
		width: 29px;
	}

	.pair .fg {
		left: 0;
		top: 2px;
		width: 17px;
		height: 17px;
		background: #fff;
	}

	.pair .bg {
		left: 9px;
		top: 11px;
		width: 15px;
		height: 15px;
		border-color: #ccc;
		background: #000;
	}

	.field {
		position: relative;
		flex: 1;
		overflow: hidden;
		margin-right: 13px;
		background: linear-gradient(transparent, #000), linear-gradient(90deg, #fff, #f00);
	}

	.picker {
		position: absolute;
		left: -5px;
		top: -5px;
		width: 8px;
		height: 8px;
		border: 1px solid #222;
		border-radius: 50%;
	}

	.hue {
		position: relative;
		width: 17px;
		background: linear-gradient(#f00, #f0f, #00f, #0ff, #0f0, #ff0, #f00);
	}

	.hue-mark {
		position: absolute;
		left: -7px;
		bottom: -4px;
		color: #eee;
	}

	.adjust-body {
		height: 91px;
		padding: 0 8px;
	}

	h2 {
		margin: 0;
		padding: 4px 0 2px;
		font: inherit;
	}

	.adjust-row {
		display: flex;
		justify-content: center;
		height: 22px;
		gap: 4px;
		padding-right: 42px;
		color: #c9c9c9;
	}

	.layers {
		flex: 1;
		display: flex;
		flex-direction: column;
		margin: 0;
	}

	.layer-row {
		display: flex;
		align-items: center;
		box-sizing: border-box;
		height: 23px;
		padding: 0 4px;
		border-bottom: 1px solid #404040;
		color: #b5b5b5;
	}

	.filter-row {
		height: 22px;
	}

	.filters {
		display: flex;
		margin-left: 5px;
		color: #aaa;
	}

	.filters button {
		width: 20px;
	}

	.toggle {
		width: 5px;
		height: 5px;
		margin-left: 7px;
		border: 1px solid #444;
		border-bottom: 6px solid #3f3f3f;
		background: #777;
	}

	.amount {
		display: flex;
		align-items: center;
		gap: 3px;
		margin-left: auto;
		white-space: nowrap;
	}

	.amount input {
		width: 30px;
		height: 16px;
		border: 1px solid #444;
		background: #505050;
		color: #777;
		text-align: center;
	}

	.step {
		width: 15px;
		height: 16px;
		margin-right: 17px;
		border: 1px solid #444;
		background: #616161;
	}

	.lock-label {
		width: 27px;
	}

	.locks {
		display: flex;
		color: #aaa;
	}

	.locks button {
		width: 18px;
	}

	.layer-list {
		flex: 1;
		padding-right: 12px;
		background: linear-gradient(270deg, #404040 12px, #454545 12px);
	}

	.layer {
		display: flex;
		height: 26px;
		border-bottom: 1px solid #3a3a3a;
	}

	.eye {
		width: 25px;
		background: #535353;
		color: #ccc;
	}

	.layer-main {
		flex: 1;
		display: flex;
		align-items: center;
		padding: 0 12px 0 2px;
		background: #6b7d96;
	}

	.thumb {
		width: 25px;
		height: 19px;
		margin-right: 9px;
		border: 1px solid #222;
		background: #fff;
	}

	.layer-main em {
		flex: 1;
		color: #fff;
	}

	.layer-footer {
		display: flex;
		justify-content: flex-end;
		height: 15px;
		padding-right: 17px;
		border-top: 1px solid #383838;
		background: #535353;
	}

	.layer-footer button {
		width: 22px;
		color: #d5d5d5;
	}

	.layer-footer .dim {
		color: #8a8a8a;
	}

	/* Stamp over the lower right corner */
	.watermark {
		position: absolute;
		right: 53px;
		bottom: 17px;
		opacity: 0.88;
		pointer-events: none;
	}

	.wm-bold {
		font: bold 38px 'Liberation Sans', sans-serif;
	}

	.wm-du {
		fill: #4a4a4a;
		font: bold 24px 'Liberation Sans', sans-serif;
	}

	.wm-cjk {
		font: bold 30px 'Noto Sans CJK SC', sans-serif;
	}

	.wm-url {
		font: 20px 'Noto Sans', sans-serif;
	}
</style>
